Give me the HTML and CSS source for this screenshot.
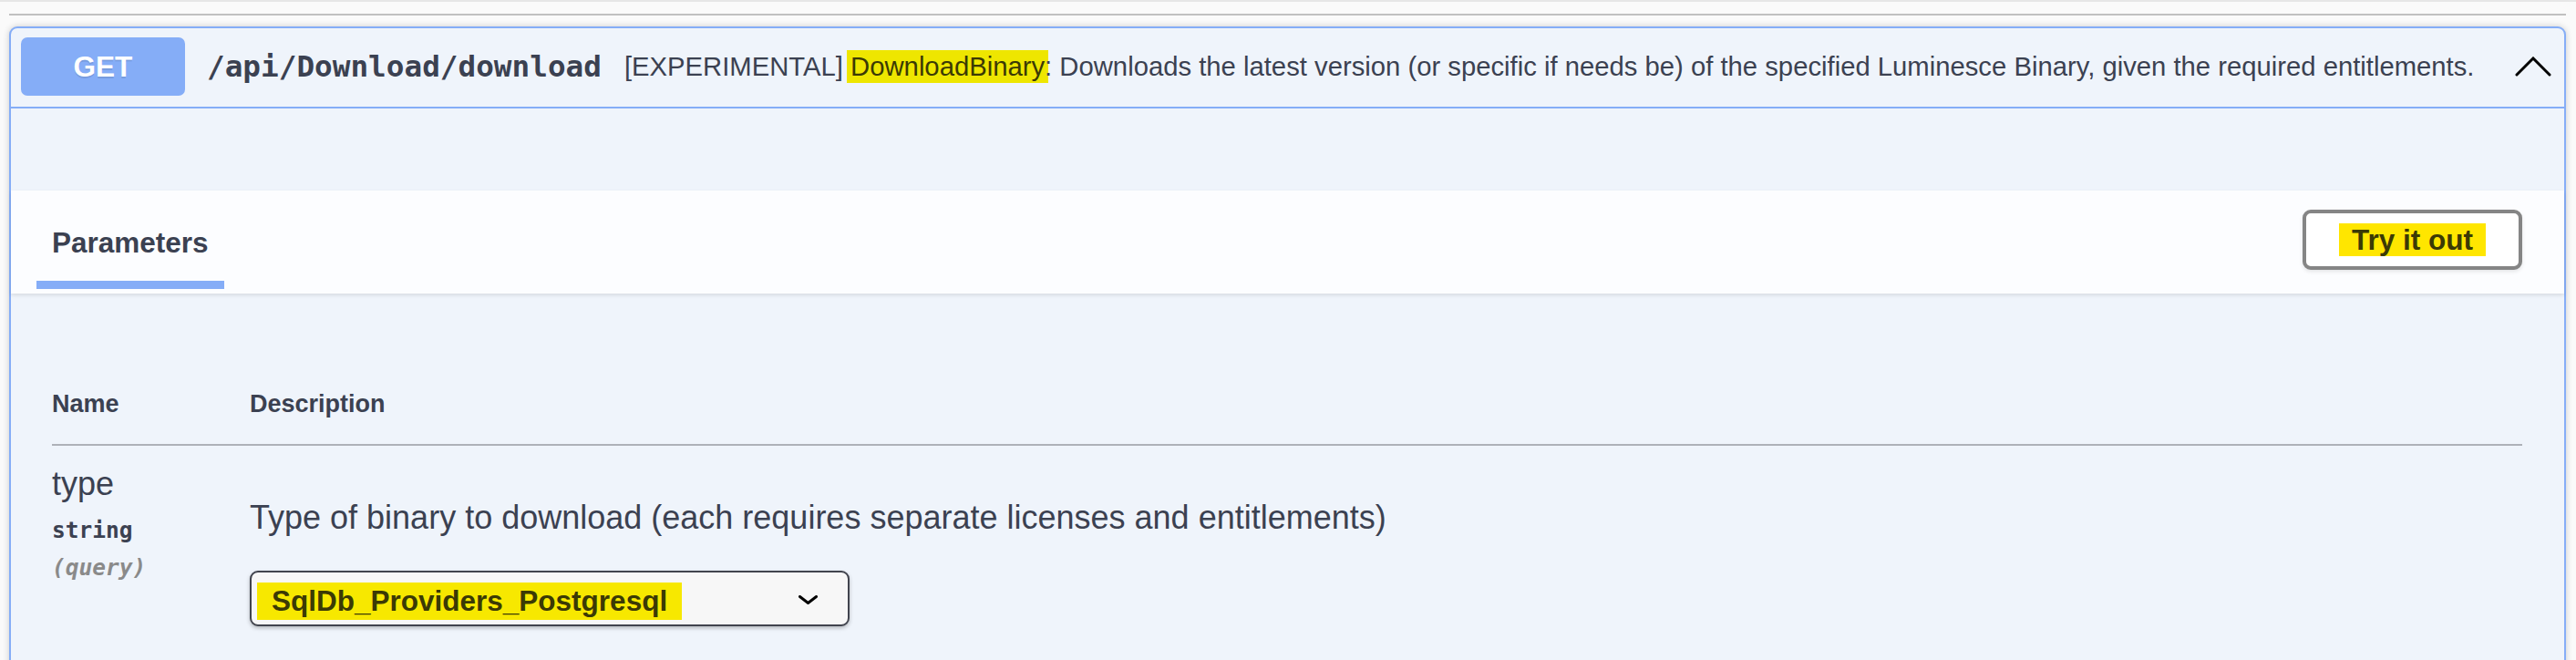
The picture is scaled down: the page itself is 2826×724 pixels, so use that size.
FILE: index.html
```html
<!DOCTYPE html>
<html lang="en">
<head>
<meta charset="utf-8">
<title>GET /api/Download/download</title>
<link rel="stylesheet" href="styles.css">
</head>
<body>
<div class="topband"></div>
<div class="page">
  <div class="rule"></div>
  <div class="opblock">
    <div class="summary">
      <span class="method">GET</span>
      <span class="path">/api/Download/download</span>
      <div class="summary-desc">[EXPERIMENTAL] <span class="hl hl-desc">DownloadBinary</span>: Downloads the latest version (or specific if needs be) of the specified Luminesce Binary, given the required entitlements.</div>
      <svg class="chevron" viewBox="0 0 40 22" aria-hidden="true"><polyline points="2,20 20,2 38,20" fill="none" stroke="#000" stroke-width="3" stroke-linecap="round" stroke-linejoin="miter"/></svg>
    </div>
    <div class="desc-wrapper"></div>
    <div class="section-header">
      <div class="tab">
        <h4 class="tab-title">Parameters</h4>
        <div class="tab-underline"></div>
      </div>
      <button class="try-out"><span class="hl hl-btn">Try it out</span></button>
    </div>
    <div class="params">
      <table class="ptable">
        <thead>
          <tr>
            <th class="col-name">Name</th>
            <th>Description</th>
          </tr>
        </thead>
        <tbody>
          <tr>
            <td class="cell-name">
              <div class="pname">type</div>
              <div class="ptype">string</div>
              <div class="pin">(query)</div>
            </td>
            <td class="cell-desc">
              <p class="pdesc">Type of binary to download (each requires separate licenses and entitlements)</p>
              <div class="select">
                <span class="hl hl-sel">SqlDb_Providers_Postgresql</span>
                <svg class="sel-arrow" viewBox="0 0 21 10" aria-hidden="true"><polyline points="1.5,1.5 10.5,8.5 19.5,1.5" fill="none" stroke="#000" stroke-width="3" stroke-linecap="round"/></svg>
              </div>
            </td>
          </tr>
        </tbody>
      </table>
    </div>
  </div>
</div>
</body>
</html>
```
FILE: styles.css
```css
html, body {
  margin: 0;
  overflow: hidden;
  background: #fafafa;
}
body {
  font-family: "Liberation Sans", Arial, sans-serif;
  color: #3b4151;
}
.topband {
  height: 2px;
  background: #e6e6e6;
}
.page {
  padding: 0 11px 0 10px;
}
.rule {
  margin-top: 13px;
  height: 2px;
  background: #c0c0c0;
}
.opblock {
  margin-top: 12px;
  border: 2px solid #85adf7;
  border-radius: 9px;
  background: #eff4fb;
  box-shadow: 0 0 7px rgba(0, 0, 0, 0.19);
}
.summary {
  display: flex;
  align-items: center;
  padding: 10px 0 12px 11px;
  border-bottom: 2px solid #85adf7;
}
.method {
  flex: none;
  width: 180px;
  height: 64px;
  display: flex;
  align-items: center;
  justify-content: center;
  background: #85adf7;
  border-radius: 7px;
  color: #fff;
  font-size: 31.5px;
  font-weight: 700;
  text-shadow: 0 2px 0 rgba(0, 0, 0, 0.1);
}
.path {
  flex: none;
  margin-left: 24px;
  font-family: "DejaVu Sans Mono", "Liberation Mono", monospace;
  font-weight: 700;
  font-size: 32.7px;
  color: #3b4151;
}
.summary-desc {
  flex: 1;
  margin-left: 25px;
  font-size: 29.25px;
  white-space: nowrap;
}
.hl {
  display: inline-block;
  color: #3b3a05;
}
.hl-desc {
  padding: 0 4px;
  margin: 0 -4px;
  line-height: 36px;
  background: #eee600;
}
.chevron {
  flex: none;
  width: 40px;
  height: 22px;
  margin-right: 14px;
}
.desc-wrapper {
  height: 90px;
}
.section-header {
  display: flex;
  justify-content: space-between;
  align-items: flex-start;
  padding: 0 46px 5px 45px;
  background: #fcfdff;
  box-shadow: 0 2px 4px rgba(0, 0, 0, 0.1);
}
.tab {
  padding-top: 39px;
  display: flex;
  flex-direction: column;
  align-items: center;
}
.tab-title {
  margin: 0;
  font-size: 31.5px;
  line-height: 36px;
  font-weight: 700;
}
.tab-underline {
  margin-top: 24px;
  width: 120%;
  height: 9px;
  flex: none;
  background: #85adf7;
}
.try-out {
  align-self: center;
  box-sizing: border-box;
  height: 66px;
  padding: 0 36px;
  border: 4px solid #858585;
  border-radius: 9px;
  background: #fff;
  box-shadow: 0 2px 4px rgba(0, 0, 0, 0.1);
  font-family: "Liberation Sans", Arial, sans-serif;
  font-size: 31.5px;
  font-weight: 700;
  color: #3b4151;
}
.hl-btn {
  padding: 0 14px;
  line-height: 36px;
  background: #ffe600;
}
.params {
  padding: 79px 46px 120px 45px;
}
.ptable {
  width: 100%;
  border-collapse: collapse;
}
.ptable th {
  text-align: left;
  font-size: 27px;
  line-height: 31px;
  font-weight: 700;
  padding: 27px 0 28px;
  border-bottom: 2px solid #aeb1b8;
}
.ptable .col-name {
  width: 217px;
}
.ptable td {
  vertical-align: top;
  padding: 21px 0 0;
}
.pname {
  font-size: 36px;
  line-height: 41px;
}
.ptype {
  margin-top: 16px;
  font-family: "DejaVu Sans Mono", "Liberation Mono", monospace;
  font-weight: 700;
  font-size: 24.5px;
  line-height: 30px;
}
.pin {
  margin-top: 11px;
  font-family: "DejaVu Sans Mono", "Liberation Mono", monospace;
  font-weight: 600;
  font-style: italic;
  font-size: 24.5px;
  line-height: 30px;
  color: #8a8a8a;
}
.pdesc {
  margin: 38px 0 38px;
  font-size: 36px;
  line-height: 40px;
}
.select {
  box-sizing: border-box;
  width: 658px;
  height: 61px;
  display: flex;
  align-items: center;
  padding: 11px 33px 5px 6px;
  border: 2px solid #41444e;
  border-radius: 9px;
  background: #f7f7f7;
  box-shadow: 0 2px 4px rgba(0, 0, 0, 0.25);
}
.hl-sel {
  padding: 0 16px;
  line-height: 41px;
  font-size: 31.5px;
  font-weight: 700;
  background: #f7e800;
}
.sel-arrow {
  flex: none;
  width: 21px;
  height: 10px;
  margin-left: auto;
  margin-bottom: 4px;
}
```
